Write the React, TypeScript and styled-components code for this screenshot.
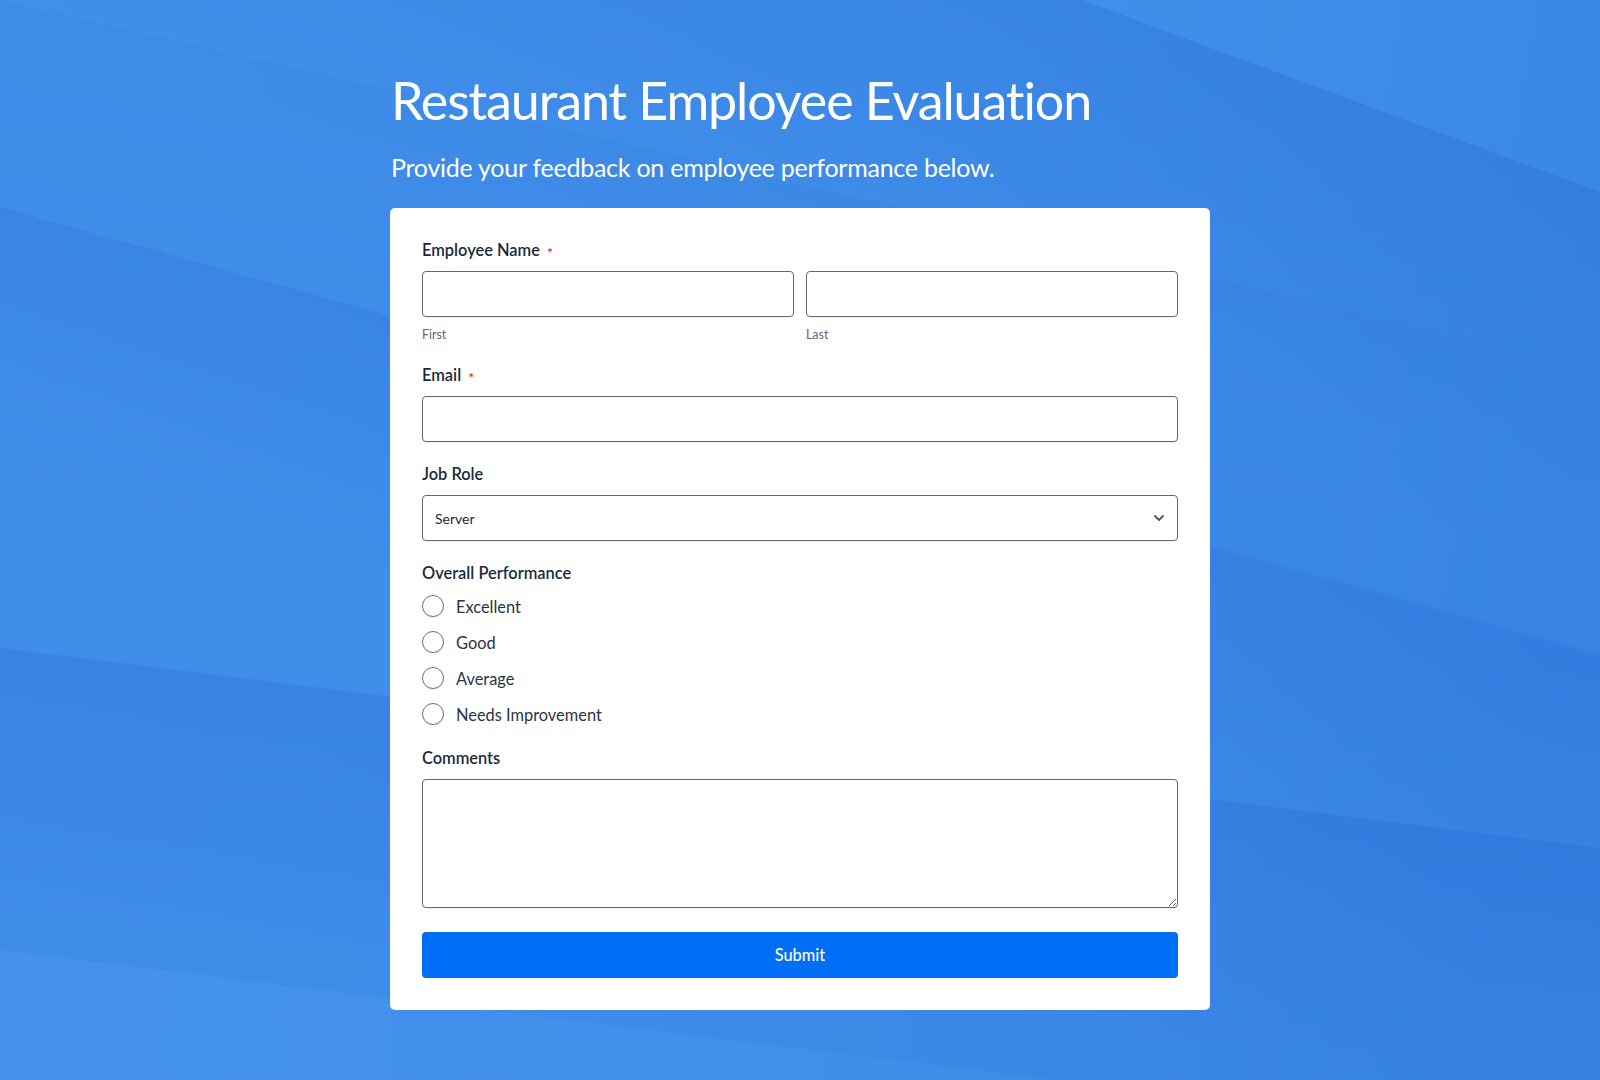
import React from "react";
import styled, { createGlobalStyle } from "styled-components";

const GlobalStyle = createGlobalStyle`
  html, body {
    margin: 0;
    padding: 0;
  }
  body {
    font-family: Lato, "Noto Sans", sans-serif;
    background: #4190ec;
  }
  * {
    box-sizing: border-box;
  }
`;

const Page = styled.div`
  position: relative;
  min-height: 1080px;
  overflow: hidden;
`;

const Backdrop = styled.svg`
  position: absolute;
  inset: 0;
  width: 100%;
  height: 100%;
  z-index: 0;
`;

const Content = styled.main`
  position: relative;
  z-index: 1;
  width: 820px;
  margin: 0 auto;
  padding: 69px 0 70px;
`;

const Title = styled.h1`
  margin: 0 0 0 1px;
  font-size: 52px;
  line-height: 62px;
  font-weight: 400;
  letter-spacing: -1.1px;
  color: #ffffff;
`;

const Subtitle = styled.p`
  margin: 21px 0 26px 1px;
  font-size: 25px;
  line-height: 30px;
  font-weight: 400;
  letter-spacing: -0.25px;
  color: #ffffff;
`;

const Card = styled.form`
  background: #ffffff;
  border-radius: 5px;
  padding: 32px;
  display: flex;
  flex-direction: column;
  gap: 22px;
`;

const Field = styled.div`
  display: flex;
  flex-direction: column;
`;

const Label = styled.label<{ $gap?: number }>`
  display: block;
  height: 20px;
  font-size: 16.4px;
  line-height: 20px;
  font-weight: 600;
  color: #192a3e;
  margin-bottom: ${(p) => p.$gap ?? 11}px;
`;

const Required = styled.span`
  position: relative;
  top: 2px;
  color: #d8321f;
  font-size: 14px;
  line-height: 1;
  margin-left: 7px;
`;

const NameRow = styled.div`
  display: grid;
  grid-template-columns: 1fr 1fr;
  gap: 12px;
`;

const SubField = styled.div`
  display: flex;
  flex-direction: column;
`;

const SubLabel = styled.span`
  margin-top: 10px;
  font-size: 12.4px;
  line-height: 16px;
  color: #5e6878;
`;

const TextInput = styled.input`
  width: 100%;
  height: 46px;
  border: 1px solid #5f6773;
  border-radius: 4px;
  padding: 0 12px;
  font-family: inherit;
  font-size: 14px;
  color: #192a3e;
  background: #ffffff;
  box-shadow: 0 1px 2px rgba(30, 40, 60, 0.08);
  outline: none;
`;

const SelectWrap = styled.div`
  position: relative;
`;

const Select = styled.select`
  width: 100%;
  height: 46px;
  appearance: none;
  border: 1px solid #5f6773;
  border-radius: 4px;
  padding: 0 36px 0 12px;
  font-family: inherit;
  font-size: 14px;
  color: #192a3e;
  background: #ffffff;
  box-shadow: 0 1px 2px rgba(30, 40, 60, 0.08);
  outline: none;
`;

const Chevron = styled.svg`
  position: absolute;
  right: 14px;
  top: 20px;
  pointer-events: none;
`;

const Options = styled.div`
  display: flex;
  flex-direction: column;
  gap: 12px;
`;

const Option = styled.label`
  display: flex;
  align-items: center;
  gap: 12px;
  height: 24px;
  font-size: 16.4px;
  color: #2c3345;
  cursor: pointer;
`;

const Radio = styled.input`
  appearance: none;
  margin: 0;
  width: 22px;
  height: 22px;
  border-radius: 50%;
  border: 1.5px solid #6b7280;
  background: #ffffff;
  box-shadow: 0 1px 2px rgba(30, 40, 60, 0.1);
  &:checked {
    border: 6px solid #006ef5;
  }
`;

const TextArea = styled.textarea`
  width: 100%;
  height: 129px;
  border: 1px solid #5f6773;
  border-radius: 4px;
  padding: 10px 12px;
  font-family: inherit;
  font-size: 14px;
  color: #192a3e;
  box-shadow: 0 1px 2px rgba(30, 40, 60, 0.08);
  outline: none;
  display: block;
`;

const SubmitButton = styled.button`
  margin-top: 2px;
  height: 46px;
  padding-bottom: 2px;
  border: none;
  border-radius: 4px;
  background: #006ef5;
  color: #ffffff;
  font-family: inherit;
  font-size: 16.4px;
  font-weight: 500;
  cursor: pointer;
`;

const ratings = ["Excellent", "Good", "Average", "Needs Improvement"];

// faceted blue background, each band darker at its top edge
const Background: React.FC = () => (
  <Backdrop viewBox="0 0 1600 1080" preserveAspectRatio="none">
    <defs>
      <linearGradient id="base" x1="0" y1="0" x2="1600" y2="300" gradientUnits="userSpaceOnUse">
        <stop offset="0" stopColor="#4592ee" />
        <stop offset="0.6" stopColor="#4290ec" />
        <stop offset="1" stopColor="#3b87e7" />
      </linearGradient>
      <linearGradient id="e0" x1="800" y1="184" x2="760" y2="420" gradientUnits="userSpaceOnUse">
        <stop offset="0" stopColor="#1c5fc4" stopOpacity="0.06" />
        <stop offset="1" stopColor="#1c5fc4" stopOpacity="0" />
      </linearGradient>
      <linearGradient id="e2" x1="1340" y1="96" x2="1250" y2="380" gradientUnits="userSpaceOnUse">
        <stop offset="0" stopColor="#1a5cc6" stopOpacity="0.22" />
        <stop offset="1" stopColor="#1a5cc6" stopOpacity="0.08" />
      </linearGradient>
      <linearGradient id="e1" x1="400" y1="319" x2="330" y2="560" gradientUnits="userSpaceOnUse">
        <stop offset="0" stopColor="#1a5cc6" stopOpacity="0.16" />
        <stop offset="1" stopColor="#1a5cc6" stopOpacity="0" />
      </linearGradient>
      <linearGradient id="e3" x1="800" y1="748" x2="770" y2="1000" gradientUnits="userSpaceOnUse">
        <stop offset="0" stopColor="#1a5cc6" stopOpacity="0.2" />
        <stop offset="1" stopColor="#1a5cc6" stopOpacity="0.04" />
      </linearGradient>
      <linearGradient id="e4" x1="0" y1="0" x2="1600" y2="0" gradientUnits="userSpaceOnUse">
        <stop offset="0" stopColor="#4a96f0" stopOpacity="0.55" />
        <stop offset="1" stopColor="#4a96f0" stopOpacity="0.15" />
      </linearGradient>
    </defs>
    <rect x="0" y="0" width="1600" height="1080" fill="url(#base)" />
    <polygon points="0,0 1600,368 1600,1080 0,1080" fill="url(#e0)" />
    <polygon points="1082,0 1600,192 1600,1080 0,1080 0,0" fill="url(#e2)" />
    <polygon points="0,207 1600,655 1600,1080 0,1080" fill="url(#e1)" />
    <polygon points="0,648 1600,848 1600,1080 0,1080" fill="url(#e3)" />
    <polygon points="0,950 1600,1147 1600,1080 0,1080" fill="url(#e4)" />
  </Backdrop>
);

const App: React.FC = () => {
  return (
    <Page>
      <GlobalStyle />
      <Background />
      <Content>
        <Title>Restaurant Employee Evaluation</Title>
        <Subtitle>Provide your feedback on employee performance below.</Subtitle>
        <Card onSubmit={(e) => e.preventDefault()}>
          <Field>
            <Label>
              Employee Name<Required>*</Required>
            </Label>
            <NameRow>
              <SubField>
                <TextInput type="text" aria-label="First" />
                <SubLabel>First</SubLabel>
              </SubField>
              <SubField>
                <TextInput type="text" aria-label="Last" />
                <SubLabel>Last</SubLabel>
              </SubField>
            </NameRow>
          </Field>

          <Field>
            <Label>
              Email<Required>*</Required>
            </Label>
            <TextInput type="email" />
          </Field>

          <Field>
            <Label>Job Role</Label>
            <SelectWrap>
              <Select defaultValue="Server">
                <option>Server</option>
                <option>Cook</option>
                <option>Host</option>
                <option>Bartender</option>
                <option>Dishwasher</option>
              </Select>
              <Chevron width="10" height="6" viewBox="0 0 10 6">
                <polyline
                  points="1,1 5,5 9,1"
                  fill="none"
                  stroke="#4b5563"
                  strokeWidth="1.8"
                  strokeLinecap="round"
                  strokeLinejoin="round"
                />
              </Chevron>
            </SelectWrap>
          </Field>

          <Field>
            <Label $gap={11}>Overall Performance</Label>
            <Options>
              {ratings.map((r) => (
                <Option key={r}>
                  <Radio type="radio" name="performance" value={r} />
                  {r}
                </Option>
              ))}
            </Options>
          </Field>

          <Field>
            <Label>Comments</Label>
            <TextArea />
          </Field>

          <SubmitButton type="submit">Submit</SubmitButton>
        </Card>
      </Content>
    </Page>
  );
};

export default App;
